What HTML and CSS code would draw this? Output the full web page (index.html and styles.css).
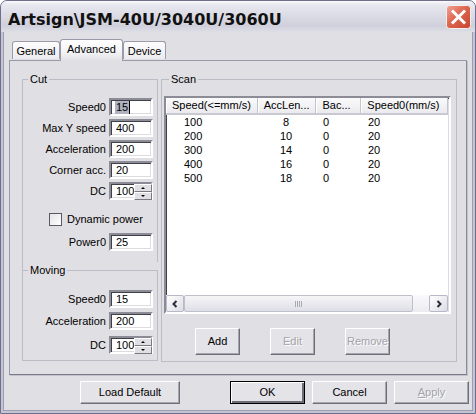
FILE: index.html
```html
<!DOCTYPE html>
<html>
<head>
<meta charset="utf-8">
<title>Artsign</title>
<link rel="stylesheet" href="styles.css">
</head>
<body>
<div class="window">
  <div class="titlebar">
    <span class="title">Artsign\JSM-40U/3040U/3060U</span>
    <span class="close">
      <svg width="25" height="24" viewBox="0 0 25 24">
        <defs>
          <linearGradient id="cg" x1="0" y1="0" x2="1" y2="1">
            <stop offset="0" stop-color="#f2a596"/>
            <stop offset="0.45" stop-color="#dd6550"/>
            <stop offset="1" stop-color="#c8422e"/>
          </linearGradient>
        </defs>
        <rect x="0.5" y="0.5" width="24" height="23" rx="3" fill="url(#cg)" stroke="#f4f0f0"/>
        <path d="M7 6.5 L18 17.5 M18 6.5 L7 17.5" stroke="#fff" stroke-width="3" stroke-linecap="square"/>
      </svg>
    </span>
  </div>
  <div class="client">
    <div class="tabs">
      <div class="tab">General</div>
      <div class="tab active">Advanced</div>
      <div class="tab">Device</div>
    </div>
    <div class="pane">
      <div class="leftcol">
        <fieldset class="group cut">
          <legend>Cut</legend>
          <div class="row"><span class="lbl">Speed0</span><span class="edit"><span class="sel">15</span></span></div>
          <div class="row"><span class="lbl">Max Y speed</span><span class="edit">400</span></div>
          <div class="row"><span class="lbl">Acceleration</span><span class="edit">200</span></div>
          <div class="row"><span class="lbl">Corner acc.</span><span class="edit">20</span></div>
          <div class="row"><span class="lbl">DC</span><span class="edit spin">100<span class="spinbtns"><span class="sb up"></span><span class="sb down"></span></span></span></div>
          <div class="check"><span class="box"></span><span>Dynamic power</span></div>
          <div class="row power"><span class="lbl">Power0</span><span class="edit">25</span></div>
        </fieldset>
        <fieldset class="group moving">
          <legend>Moving</legend>
          <div class="row"><span class="lbl">Speed0</span><span class="edit">15</span></div>
          <div class="row"><span class="lbl">Acceleration</span><span class="edit">200</span></div>
          <div class="row mdc"><span class="lbl">DC</span><span class="edit spin">100<span class="spinbtns"><span class="sb up"></span><span class="sb down"></span></span></span></div>
        </fieldset>
      </div>
      <fieldset class="group scan">
        <legend>Scan</legend>
        <div class="list">
          <div class="lhead">
            <div class="hc c1">Speed(&lt;=mm/s)</div>
            <div class="hc c2">AccLen...</div>
            <div class="hc c3">Bac...</div>
            <div class="hc c4">Speed0(mm/s)</div>
          </div>
          <div class="lbody">
            <div class="lrow"><span class="c1">100</span><span class="c2">8</span><span class="c3">0</span><span class="c4">20</span></div>
            <div class="lrow"><span class="c1">200</span><span class="c2">10</span><span class="c3">0</span><span class="c4">20</span></div>
            <div class="lrow"><span class="c1">300</span><span class="c2">14</span><span class="c3">0</span><span class="c4">20</span></div>
            <div class="lrow"><span class="c1">400</span><span class="c2">16</span><span class="c3">0</span><span class="c4">20</span></div>
            <div class="lrow"><span class="c1">500</span><span class="c2">18</span><span class="c3">0</span><span class="c4">20</span></div>
          </div>
          <div class="hscroll">
            <span class="sbtn"><svg width="8" height="8" viewBox="0 0 8 8"><path d="M5.5 1 L2.5 4 L5.5 7" fill="none" stroke="#2b2b3a" stroke-width="2"/></svg></span>
            <span class="thumb"><svg width="8" height="6" viewBox="0 0 8 6"><path d="M0.5 0 V6 M2.5 0 V6 M4.5 0 V6 M6.5 0 V6" stroke="#a9a9b8" stroke-width="1"/></svg></span>
            <span class="track"></span>
            <span class="sbtn"><svg width="8" height="8" viewBox="0 0 8 8"><path d="M2.5 1 L5.5 4 L2.5 7" fill="none" stroke="#2b2b3a" stroke-width="2"/></svg></span>
          </div>
        </div>
        <div class="scanbtns">
          <button class="btn small">Add</button>
          <button class="btn small dis">Edit</button>
          <button class="btn small dis">Remove</button>
        </div>
      </fieldset>
    </div>
    <div class="footer">
      <button class="btn wide">Load Default</button>
      <button class="btn default">OK</button>
      <button class="btn">Cancel</button>
      <button class="btn dis"><u>A</u>pply</button>
    </div>
  </div>
</div>
</body>
</html>
```

FILE: styles.css
```css
* { box-sizing: border-box; }
html, body { margin: 0; padding: 0; }
body {
  width: 476px;
  height: 414px;
  overflow: hidden;
  background: #ffffff;
  font: 11px/13px "Liberation Sans", Arial, sans-serif;
  color: #000;
}

.window {
  width: 476px;
  height: 414px;
  display: flex;
  flex-direction: column;
  background: #c4c4d2;
  border: 1px solid #6f6f8c;
  border-radius: 7px 7px 0 0;
  overflow: hidden;
}

.titlebar {
  height: 31px;
  flex: none;
  display: flex;
  align-items: flex-start;
  padding: 0 4px 0 7px;
  background: linear-gradient(#fbfbfd 0, #e9e9f0 3px, #dcdce6 45%, #d0d0dc 80%, #dedee6 100%);
}
.title {
  margin-top: 9px;
  font: bold 16px/19px "DejaVu Sans", sans-serif;
  color: #111;
}
.close {
  margin-left: auto;
  margin-top: 4px;
  width: 25px;
  height: 24px;
}
.close svg { display: block; }

.client {
  flex: 1;
  margin: 0 2px 2px 2px;
  background: #e0dfe3;
  border: 1px solid #9d9db4;
  border-top: none;
  display: flex;
  flex-direction: column;
  padding: 6px 0 0 5px;
}

/* tabs */
.tabs {
  display: flex;
  align-items: flex-end;
  height: 22px;
  padding-left: 3px;
  position: relative;
  z-index: 1;
}
.tab {
  height: 18px;
  margin-bottom: 1px;
  padding-top: 3px;
  text-align: center;
  border: 1px solid #9a9aa8;
  border-bottom: none;
  border-radius: 3px 3px 0 0;
  background: linear-gradient(#fdfdfd, #ecebef);
}
.tab:nth-child(1) { width: 48px; }
.tab:nth-child(3) { width: 43px; }
.tab.active {
  width: 63px;
  height: 22px;
  margin-bottom: -1px;
  padding-top: 3px;
  background: linear-gradient(#ffffff, #f3f3f5 60%, #e0dfe3);
}

.pane {
  width: 458px;
  height: 315px;
  border: 1px solid #9a9aa8;
  border-right-color: #8a8a98;
  border-bottom-color: #7a7a88;
  box-shadow: 1px 1px 0 #c2c2cc;
  display: flex;
  gap: 3px;
  padding: 12px 0 0 12px;
}

/* group boxes */
.group {
  margin: 0;
  padding: 0 4px 0 0;
  border: 1px solid #bcbcc6;
  min-width: 0;
}
.group legend {
  padding: 0 2px;
  margin-left: 5px;
  line-height: 13px;
}
.leftcol {
  width: 136px;
  display: flex;
  flex-direction: column;
}
.cut {
  height: 198px;
  flex: none;
  border-bottom: none;
  border-right: none;
  padding-right: 5px;
  background: linear-gradient(#bcbcc6, #bcbcc6) right top / 1px calc(100% - 9px) no-repeat;
}
.moving { height: 97px; flex: none; margin-top: -7px; }

.row {
  display: flex;
  align-items: center;
  height: 18px;
  margin-top: 3px;
}
.cut .row:first-of-type { margin-top: 12px; }
.moving .row:first-of-type { margin-top: 13px; }
.moving .row.mdc { margin-top: 6px; }
.moving .row:nth-of-type(2) { margin-top: 4px; }
.row .lbl {
  flex: 1;
  text-align: right;
  margin-right: 3px;
  white-space: nowrap;
}
.edit {
  width: 44px;
  height: 18px;
  background: #fff;
  border: 2px solid;
  border-color: #8c8c96 #fff #fff #8c8c96;
  box-shadow: inset 1px 1px 0 #404048, inset -1px -1px 0 #dcdce0;
  padding: 1px 0 0 5px;
  display: flex;
  align-items: center;
  line-height: 13px;
}
.sel { background: #b0b2c0; padding: 0 1px; margin-left: -1px; border-right: 1px solid #000; }
.edit.spin { padding-right: 0; }
.spinbtns {
  margin: -1px -1px -1px auto;
  width: 18px;
  height: 16px;
  display: flex;
  flex-direction: column;
}
.sb {
  flex: 1;
  background: #e0dfe3;
  border: 1px solid;
  border-color: #fff #7a7a84 #7a7a84 #fff;
  display: flex;
  align-items: center;
  justify-content: center;
}
.sb::after {
  content: "";
  border-left: 2px solid transparent;
  border-right: 2px solid transparent;
}
.sb.up::after { border-bottom: 2px solid #000; }
.sb.down::after { border-top: 2px solid #000; }

.check {
  display: flex;
  align-items: center;
  margin: 13px 0 0 26px;
  height: 13px;
}
.check .box {
  width: 13px;
  height: 13px;
  border: 1px solid #5a5a66;
  background: linear-gradient(135deg, #e4e4e8, #fff);
  margin-right: 5px;
}
.row.power { margin-top: 7px; }

/* scan */
.scan {
  width: 296px;
  height: 289px;
  padding: 0 0 0 2px;
}
.list {
  margin-top: 10px;
  width: 287px;
  height: 218px;
  border: 2px solid;
  border-color: #8c8c96 #fff #fff #8c8c96;
  box-shadow: inset 1px 1px 0 #404048, inset -1px -1px 0 #dcdce0;
  background: #fff;
  display: flex;
  flex-direction: column;
  padding: 0;
}
.lhead {
  display: flex;
  height: 17px;
  flex: none;
  margin: 0 1px 0 0;
  background: linear-gradient(#fafafb, #ebeaee);
  border-bottom: 2px solid #c9c9d2;
}
.hc {
  padding-left: 6px;
  line-height: 15px;
  border-right: 1px solid #c4c4cc;
  box-shadow: inset 1px 0 0 #fff;
  white-space: nowrap;
}
.c1 { width: 92px; }
.c2 { width: 59px; }
.c3 { width: 45px; }
.c4 { width: 87px; }
.lbody { flex: 1; }
.lrow { display: flex; height: 14px; line-height: 14px; }
.lrow .c1 { padding-left: 18px; }
.lrow .c2 { text-align: center; padding-right: 3px; }
.lrow .c3, .lrow .c4 { padding-left: 6px; }

.hscroll {
  height: 17px;
  flex: none;
  display: flex;
  background: #f3f3f6;
  margin-right: 1px;
}
.sbtn {
  width: 18px;
  height: 17px;
  border: 1px solid #b8b8c8;
  border-radius: 2px;
  background: linear-gradient(135deg, #ffffff, #dcdce4);
  display: flex;
  align-items: center;
  justify-content: center;
}
.sbtn:last-child { width: 19px; }
.thumb {
  width: 229px;
  height: 17px;
  border: 1px solid #c0c0cc;
  border-radius: 2px;
  background: linear-gradient(#f6f6f8, #dedee6);
  display: flex;
  align-items: center;
  justify-content: center;
}
.track { flex: 1; background: linear-gradient(#fafafc, #ececf0); }

.scanbtns {
  display: flex;
  gap: 30px;
  margin: 14px 0 0 31px;
}

/* buttons */
.btn {
  font: 11px/13px "Liberation Sans", Arial, sans-serif;
  color: #000;
  height: 23px;
  width: 75px;
  padding: 0;
  background: #e4e3e7;
  border: 1px solid;
  border-color: #fff #6e6e78 #6e6e78 #fff;
  box-shadow: inset -1px -1px 0 #a6a6b0;
}
.btn.small { width: 45px; height: 27px; }
.btn.wide { width: 100px; }
.btn.default {
  border: 1px solid #000;
  box-shadow: inset 1px 1px 0 #fff, inset -2px -2px 0 #6e6e78;
}
.btn.dis { color: #a2a2aa; text-shadow: 1px 1px 0 #fff; }

.footer {
  display: flex;
  gap: 7px;
  padding: 6px 0 0 71px;
}
.footer .btn.wide { margin-right: 43px; }
```
